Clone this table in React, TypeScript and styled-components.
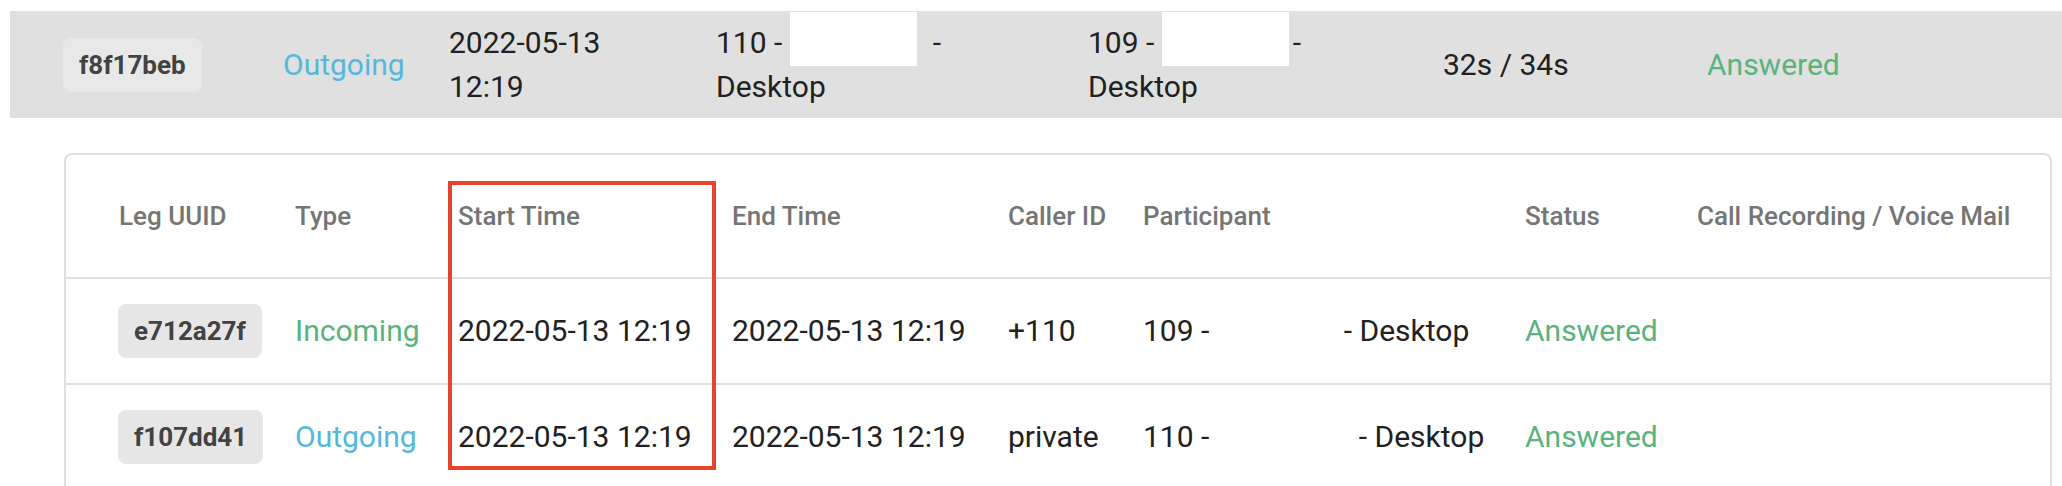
import React from "react";
import styled, { createGlobalStyle } from "styled-components";

const GlobalStyle = createGlobalStyle`
  html, body {
    margin: 0;
    padding: 0;
    background: #ffffff;
  }
  body {
    font-family: Roboto, "Noto Sans", "Liberation Sans", Arial, sans-serif;
    color: #212121;
    overflow: hidden;
  }
`;

const Page = styled.div`
  padding: 11px 0 0 10px;
`;

const SummaryBar = styled.div`
  display: grid;
  grid-template-columns: 273px 166px 267px 372px 355px 264px 1fr;
  align-items: center;
  height: 107px;
  background: #e0e0e0;
`;

const SummaryCell = styled.div<{ $pad?: number }>`
  font-size: 30px;
  line-height: 44px;
  padding-left: ${(p) => p.$pad ?? 0}px;
  white-space: nowrap;
`;

const Line = styled.div`
  display: block;
`;

const Badge = styled.span<{ $bg: string }>`
  display: inline-flex;
  align-items: center;
  height: 54px;
  padding: 0 16px;
  border-radius: 8px;
  background: ${(p) => p.$bg};
  color: #424242;
  font-size: 26px;
  font-weight: 700;
  line-height: 1;
`;

const Colored = styled.span<{ $tone: "blue" | "green" }>`
  color: ${(p) => (p.$tone === "blue" ? "#54b8db" : "#58b37d")};
`;

const BarRedaction = styled.span<{ $w: number; $after: number }>`
  display: inline-block;
  vertical-align: top;
  position: relative;
  top: -9px;
  width: ${(p) => p.$w}px;
  height: 54px;
  margin-bottom: -10px;
  margin-right: ${(p) => p.$after}px;
  background: #ffffff;
`;

const Card = styled.div`
  position: relative;
  margin: 35px 10px 0 54px;
  border: 2px solid #e0e0e0;
  border-radius: 8px;
`;

const COLS = "229px 163px 274px 276px 135px 382px 172px 1fr";

const HeaderRow = styled.div`
  display: grid;
  grid-template-columns: ${COLS};
  align-items: center;
  height: 122px;
  border-bottom: 2px solid #e0e0e0;
`;

const HeadCell = styled.div<{ $pad?: number }>`
  padding-left: ${(p) => p.$pad ?? 0}px;
  font-size: 26px;
  font-weight: 500;
  color: #757575;
  white-space: nowrap;
`;

const DataRow = styled.div`
  display: grid;
  grid-template-columns: ${COLS};
  align-items: center;
  height: 104px;
  border-bottom: 2px solid #e0e0e0;
`;

const DataCell = styled.div<{ $pad?: number }>`
  padding-left: ${(p) => p.$pad ?? 0}px;
  font-size: 30px;
  line-height: 44px;
  color: #212121;
  white-space: pre;
`;

const Blank = styled.span<{ $w: number }>`
  display: inline-block;
  width: ${(p) => p.$w}px;
`;

const Highlight = styled.div`
  position: absolute;
  left: 382px;
  top: 26px;
  width: 268px;
  height: 289px;
  box-sizing: border-box;
  border: 4px solid #e8432d;
  pointer-events: none;
`;

type Leg = {
  id: string;
  type: "Incoming" | "Outgoing";
  start: string;
  end: string;
  caller: string;
  ext: string;
  blank: number;
  status: string;
};

const legs: Leg[] = [
  {
    id: "e712a27f",
    type: "Incoming",
    start: "2022-05-13 12:19",
    end: "2022-05-13 12:19",
    caller: "+110",
    ext: "109 - ",
    blank: 127,
    status: "Answered",
  },
  {
    id: "f107dd41",
    type: "Outgoing",
    start: "2022-05-13 12:19",
    end: "2022-05-13 12:19",
    caller: "private",
    ext: "110 - ",
    blank: 142,
    status: "Answered",
  },
];

export default function App() {
  return (
    <>
      <GlobalStyle />
      <Page>
        <SummaryBar>
          <SummaryCell $pad={53}>
            <Badge $bg="#e8e8e8">f8f17beb</Badge>
          </SummaryCell>
          <SummaryCell>
            <Colored $tone="blue">Outgoing</Colored>
          </SummaryCell>
          <SummaryCell>
            <Line>2022-05-13</Line>
            <Line>12:19</Line>
          </SummaryCell>
          <SummaryCell>
            <Line>
              110 - <BarRedaction $w={127} $after={16} />-
            </Line>
            <Line>Desktop</Line>
          </SummaryCell>
          <SummaryCell>
            <Line>
              109 - <BarRedaction $w={127} $after={4} />-
            </Line>
            <Line>Desktop</Line>
          </SummaryCell>
          <SummaryCell>32s / 34s</SummaryCell>
          <SummaryCell>
            <Colored $tone="green">Answered</Colored>
          </SummaryCell>
        </SummaryBar>

        <Card>
          <HeaderRow>
            <HeadCell $pad={53}>Leg UUID</HeadCell>
            <HeadCell>Type</HeadCell>
            <HeadCell>Start Time</HeadCell>
            <HeadCell>End Time</HeadCell>
            <HeadCell>Caller ID</HeadCell>
            <HeadCell>Participant</HeadCell>
            <HeadCell>Status</HeadCell>
            <HeadCell>Call Recording / Voice Mail</HeadCell>
          </HeaderRow>
          {legs.map((leg) => (
            <DataRow key={leg.id}>
              <DataCell $pad={52}>
                <Badge $bg="#e6e6e6">{leg.id}</Badge>
              </DataCell>
              <DataCell>
                <Colored $tone={leg.type === "Incoming" ? "green" : "blue"}>
                  {leg.type}
                </Colored>
              </DataCell>
              <DataCell>{leg.start}</DataCell>
              <DataCell>{leg.end}</DataCell>
              <DataCell>{leg.caller}</DataCell>
              <DataCell>
                {leg.ext}
                <Blank $w={leg.blank} />- Desktop
              </DataCell>
              <DataCell>
                <Colored $tone="green">{leg.status}</Colored>
              </DataCell>
              <DataCell />
            </DataRow>
          ))}
          <Highlight />
        </Card>
      </Page>
    </>
  );
}
